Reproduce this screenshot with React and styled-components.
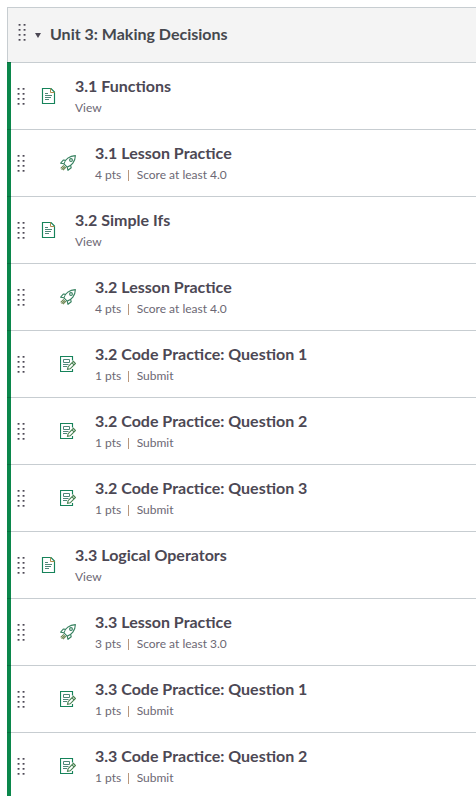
import React from 'react'
import styled, { createGlobalStyle } from 'styled-components'

const GlobalStyle = createGlobalStyle`
    body {
        margin: 0;
        background: #fff;
        overflow: hidden;
        font-family: Lato, "Liberation Sans", sans-serif;
        color: #4c4854;
    }
`

const Module = styled.div`
    margin: 7px 0 0 7px;
    height: 789px;
    overflow: hidden;
`

const Header = styled.div`
    display: flex;
    align-items: center;
    box-sizing: border-box;
    height: 55px;
    padding-left: 10px;
    border: solid #c7cdd1;
    border-width: 1px 0 0 1px;
    background: #f4f4f4;
`

const HeaderHandle = styled.div`
    display: flex;
    margin: -6px 9px 0 0;
`

const Caret = styled.div`
    margin-top: 1px;
    border: solid transparent;
    border-width: 5px 3.5px 0;
    border-top-color: #4c4854;
`

const HeaderTitle = styled.div`
    margin: -2px 0 0 9px;
    font-size: 16px;
    font-weight: 700;
    line-height: 24px;
    color: #45484e;
`

const Row = styled.div`
    display: flex;
    height: 67px;
`

const StatusBar = styled.div`
    box-sizing: border-box;
    width: 4px;
    background: #0b874b;
    border-top: 1px solid #0a6e3f;
`

const RowBody = styled.div`
    flex: 1;
    display: flex;
    align-items: center;
    border-top: 1px solid #c7cdd1;
    padding-left: 6px;
`

const RowIcon = styled.div`
    display: flex;
    width: 16px;
    margin: 0 ${({ $indent }) => $indent ? 19 : 18}px 0 ${({ $indent }) => $indent ? 35 : 16}px;
`

const Title = styled.div`
    font-size: 16px;
    font-weight: 700;
    line-height: 24px;
    margin-top: -1px;
`

const Details = styled.div`
    display: flex;
    margin-top: 1px;
    font-size: 12px;
    line-height: 18px;
    color: #6c6874;
`

const Separator = styled.div`
    width: 1px;
    height: 11px;
    margin: 4px 7.5px 0 7px;
    background: #b9977c;
`

const Handle = () => (
    <svg width="8" height="17" viewBox="0 0 8 17" fill="#4c4854">
        {[0, 5, 10, 15].map(y => (
            <g key={y}>
                <rect x=".6" y={y} width="1.9" height="1.7" />
                <rect x="5.6" y={y} width="1.9" height="1.7" />
            </g>
        ))}
    </svg>
)

const PageIcon = () => (
    <svg width="16" height="16" viewBox="0 0 16 16" fill="none" stroke="#16835a">
        <path d="M1.5 .5H10L13.5 4V15.5H1.5Z" strokeWidth="1.15" />
        <path d="M9.5 .5V4.5H13.5" stroke="#b08c50" />
        <path d="M4 5.5H7M4 7.5H11M4 9.5H10M4 11.5H8" stroke="#4f8779" />
    </svg>
)

const QuizIcon = () => (
    <svg width="16" height="16" viewBox="0 0 16 16" fill="none" stroke="#36805f" strokeWidth="1.1" strokeLinejoin="round">
        <path d="M3.9 8.8C5.1 4.5 9.3 .9 15.4 .6C15.3 6.6 11.5 10.8 7.2 12.1Z" />
        <path d="M5.6 5.4L3.3 5L.7 8.2L3.9 8.8M10.6 10.3L11.2 12.7L8 15.3L7.2 12.1" />
        <circle cx="11" cy="5" r="1.4" />
        <path d="M3.8 10.3L.7 13.4M4.9 11.3L1.6 14.6M6 12.2L3 15.2" stroke="#6d8550" />
    </svg>
)

const AssignmentIcon = () => (
    <svg width="16" height="16" viewBox="0 0 16 16" fill="none" stroke="#16835a">
        <path d="M12.5 4.5V.5H.5V15.5H12.5V13" strokeWidth="1.15" />
        <path d="M3.5 3.5H9.5V6.5H3.5Z" stroke="#4f8779" />
        <path d="M3 8.5H8.5M3 10.5H7" stroke="#4f8779" />
        <path d="M7.5 13.3L8.1 10.7L13.4 5.4L15.5 7.5L10.2 12.8ZM12 6.8L14.1 8.9" stroke="#478150" strokeWidth="1.1" />
    </svg>
)

const icons = { page: PageIcon, quiz: QuizIcon, assignment: AssignmentIcon }

const items = [
    { type: 'page', title: '3.1 Functions', requirement: 'View' },
    { type: 'quiz', title: '3.1 Lesson Practice', points: 4, requirement: 'Score at least 4.0' },
    { type: 'page', title: '3.2 Simple Ifs', requirement: 'View' },
    { type: 'quiz', title: '3.2 Lesson Practice', points: 4, requirement: 'Score at least 4.0' },
    { type: 'assignment', title: '3.2 Code Practice: Question 1', points: 1, requirement: 'Submit' },
    { type: 'assignment', title: '3.2 Code Practice: Question 2', points: 1, requirement: 'Submit' },
    { type: 'assignment', title: '3.2 Code Practice: Question 3', points: 1, requirement: 'Submit' },
    { type: 'page', title: '3.3 Logical Operators', requirement: 'View' },
    { type: 'quiz', title: '3.3 Lesson Practice', points: 3, requirement: 'Score at least 3.0' },
    { type: 'assignment', title: '3.3 Code Practice: Question 1', points: 1, requirement: 'Submit' },
    { type: 'assignment', title: '3.3 Code Practice: Question 2', points: 1, requirement: 'Submit' },
]

const ModuleItem = ({ type, title, points, requirement }) => {
    const Icon = icons[type]
    return (
        <Row>
            <StatusBar />
            <RowBody>
                <Handle />
                <RowIcon $indent={type !== 'page'}><Icon /></RowIcon>
                <div>
                    <Title>{title}</Title>
                    <Details>
                        {points && <>{points} pts<Separator /></>}
                        {requirement}
                    </Details>
                </div>
            </RowBody>
        </Row>
    )
}

const App = () => (
    <>
        <GlobalStyle />
        <Module>
            <Header>
                <HeaderHandle><Handle /></HeaderHandle>
                <Caret />
                <HeaderTitle>Unit 3: Making Decisions</HeaderTitle>
            </Header>
            {items.map(item => <ModuleItem key={item.title} {...item} />)}
        </Module>
    </>
)

export default App
